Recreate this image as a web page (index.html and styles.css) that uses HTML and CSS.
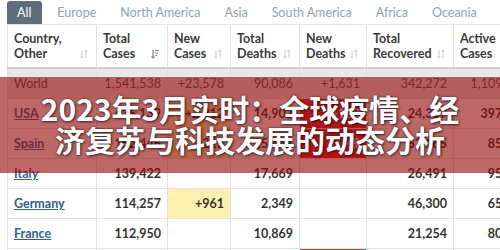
FILE: index.html
```html
<!DOCTYPE html>
<html lang="zh">
<head>
<meta charset="utf-8">
<title>2023年3月实时</title>
<link rel="stylesheet" href="styles.css">
</head>
<body>
<div class="page">
  <nav class="tabs">
    <span class="tab active">All</span>
    <span class="tab">Europe</span>
    <span class="tab">North America</span>
    <span class="tab">Asia</span>
    <span class="tab">South America</span>
    <span class="tab">Africa</span>
    <span class="tab">Oceania</span>
  </nav>
  <table class="grid">
    <colgroup>
      <col class="c1"><col class="c2"><col class="c3"><col class="c4"><col class="c5"><col class="c6"><col class="c7">
    </colgroup>
    <thead>
      <tr>
        <th><div class="hd"><span>Country,<br>Other</span><svg class="sort" viewBox="0 0 8 10"><path d="M2 1v8M0.5 7.5L2 9l1.5-1.5M6 9V1M4.5 2.5L6 1l1.5 1.5"/></svg></div></th>
        <th><div class="hd"><span>Total<br>Cases</span><svg class="sort on" viewBox="0 0 8 10"><path d="M2 1v8M0.5 7.5L2 9l1.5-1.5M4 1.5h4M4 4h3M4 6.5h2"/></svg></div></th>
        <th><div class="hd"><span>New<br>Cases</span><svg class="sort" viewBox="0 0 8 10"><path d="M2 1v8M0.5 7.5L2 9l1.5-1.5M6 9V1M4.5 2.5L6 1l1.5 1.5"/></svg></div></th>
        <th><div class="hd"><span>Total<br>Deaths</span><svg class="sort" viewBox="0 0 8 10"><path d="M2 1v8M0.5 7.5L2 9l1.5-1.5M6 9V1M4.5 2.5L6 1l1.5 1.5"/></svg></div></th>
        <th><div class="hd"><span>New<br>Deaths</span><svg class="sort" viewBox="0 0 8 10"><path d="M2 1v8M0.5 7.5L2 9l1.5-1.5M6 9V1M4.5 2.5L6 1l1.5 1.5"/></svg></div></th>
        <th><div class="hd"><span>Total<br>Recovered</span><svg class="sort" viewBox="0 0 8 10"><path d="M2 1v8M0.5 7.5L2 9l1.5-1.5M6 9V1M4.5 2.5L6 1l1.5 1.5"/></svg></div></th>
        <th><div class="hd"><span>Active<br>Cases</span><svg class="sort" viewBox="0 0 8 10"><path d="M2 1v8M0.5 7.5L2 9l1.5-1.5M6 9V1M4.5 2.5L6 1l1.5 1.5"/></svg></div></th>
      </tr>
    </thead>
    <tbody>
      <tr class="world">
        <td class="name">World</td><td>1,541,538</td><td>+23,578</td><td>90,086</td><td>+1,631</td><td>342,272</td><td>1,109,180</td>
      </tr>
      <tr>
        <td class="name"><a href="#">USA</a></td><td>435,139</td><td class="warn">+2,312</td><td>14,902</td><td class="alert">+108</td><td>24,317</td><td>397,620</td>
      </tr>
      <tr>
        <td class="name"><a href="#">Spain</a></td><td>152,446</td><td class="warn">+222</td><td>15,447</td><td class="alert">+9</td><td>52,165</td><td>85,034</td>
      </tr>
      <tr>
        <td class="name"><a href="#">Italy</a></td><td>139,422</td><td></td><td>17,669</td><td></td><td>26,491</td><td>95,262</td>
      </tr>
      <tr>
        <td class="name"><a href="#">Germany</a></td><td>114,257</td><td class="warn">+961</td><td>2,349</td><td></td><td>46,300</td><td>65,608</td>
      </tr>
      <tr>
        <td class="name"><a href="#">France</a></td><td>112,950</td><td></td><td>10,869</td><td></td><td>21,254</td><td>80,827</td>
      </tr>
      <tr>
        <td class="name"><a href="#">UK</a></td><td>65,077</td><td></td><td>7,978</td><td class="alert">+881</td><td>135</td><td>56,964</td>
      </tr>
    </tbody>
  </table>
</div>
<div class="banner">
  <h1 class="title">2023年3月实时：全球疫情、经济复苏与科技发展的动态分析</h1>
</div>
</body>
</html>
```
FILE: styles.css
```css
html, body {
  margin: 0;
  padding: 0;
}
body {
  width: 500px;
  height: 250px;
  overflow: hidden;
  background: #ffffff;
  font-family: "Lato", "Open Sans", sans-serif;
  color: #333;
  position: relative;
}
.page {
  padding: 1px 0 0 7px;
}
.tabs {
  display: flex;
  height: 23px;
  align-items: stretch;
}
.tab {
  display: flex;
  align-items: center;
  padding: 0 12px;
  font-size: 12.5px;
  color: #8fa3b4;
  white-space: nowrap;
}
.tab.active {
  background: #5d6d7b;
  color: #ffffff;
  border-radius: 3px 3px 0 0;
  padding: 0 11px 0 10px;
  margin-right: 3px;
}
.grid {
  border-collapse: collapse;
  table-layout: fixed;
  width: 526px;
  font-size: 12.5px;
}
.c1 { width: 89px; }
.c2 { width: 71px; }
.c3 { width: 63px; }
.c4 { width: 69px; }
.c5 { width: 67px; }
.c6 { width: 87px; }
.c7 { width: 80px; }
.grid th {
  height: 42px;
  padding: 0 8px 0 6px;
  border: 1px solid #e2e2e2;
  border-bottom: 2px solid #cfcfcf;
  text-align: left;
  vertical-align: middle;
  font-weight: 700;
  color: #3a3a3a;
  background: #fff;
}
.hd {
  display: flex;
  justify-content: space-between;
  align-items: flex-end;
  line-height: 15px;
}
.sort {
  width: 8px;
  height: 10px;
  margin-bottom: 2px;
  fill: none;
  stroke: #d6d6d6;
  stroke-width: 1.2;
  flex: none;
}
.sort.on {
  stroke: #8a8a8a;
}
.grid td {
  height: 29px;
  padding: 0 6px;
  border: 1px solid #e2e2e2;
  text-align: right;
  font-weight: 700;
  color: #333;
  white-space: nowrap;
  overflow: hidden;
}
.grid td.name {
  text-align: left;
}
.grid a {
  color: #2f5f93;
  text-decoration: underline;
}
.world td {
  background: #e8e8e8;
  font-weight: 400;
  color: #555;
}
.grid td.warn {
  background: #fdefae;
}
.grid td.alert {
  background: #f02828;
  color: #ffffff;
}
.banner {
  position: absolute;
  left: 0;
  right: 0;
  top: 77px;
  height: 96px;
  background: rgba(150, 10, 10, 0.62);
  display: flex;
  align-items: center;
  justify-content: center;
  padding: 0 30px;
}
.title {
  margin: 0;
  padding-bottom: 3px;
  font-family: "Noto Sans CJK SC", "Noto Sans", sans-serif;
  font-size: 30px;
  line-height: 31px;
  font-weight: 700;
  color: #ffffff;
  text-align: center;
  text-shadow: 0 0 2px rgba(0, 0, 0, 0.6), 1px 1px 3px rgba(0, 0, 0, 0.6);
}
```
